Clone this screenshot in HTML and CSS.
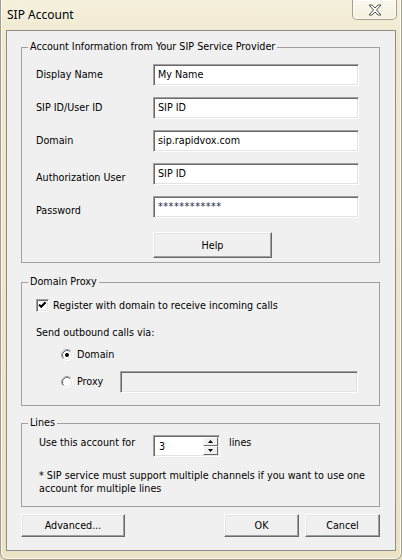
FILE: index.html
```html
<!DOCTYPE html>
<html>
<head>
<meta charset="utf-8">
<link rel="stylesheet" href="styles.css">
</head>
<body>
<div class="window">
  <div class="titlebar">
    <span class="title">SIP Account</span>
    <div class="close">
      <svg width="14" height="12" viewBox="-1 -1 14 12"><path d="M0 0H3L6 3L9 0H12L7.5 5L12 10H9L6 7L3 10H0L4.5 5Z" fill="#fff" stroke="#4f4f4f" stroke-width="1" stroke-linejoin="round"/></svg>
    </div>
  </div>
  <div class="client">
    <fieldset class="group g1">
      <legend>Account Information from Your SIP Service Provider</legend>
      <div class="form">
        <span class="lbl">Display Name</span><div class="field">My Name</div>
        <span class="lbl">SIP ID/User ID</span><div class="field">SIP ID</div>
        <span class="lbl">Domain</span><div class="field">sip.rapidvox.com</div>
        <span class="lbl low">Authorization User</span><div class="field">SIP ID</div>
        <span class="lbl low">Password</span><div class="field pw">************</div>
        <span></span><div class="btn help">Help</div>
      </div>
    </fieldset>

    <fieldset class="group g2">
      <legend>Domain Proxy</legend>
      <div class="proxy">
        <div class="check-row">
          <span class="cb"><svg width="11" height="11" viewBox="0 0 11 11"><path d="M2 4.6L4.2 6.8L8.6 2.3" fill="none" stroke="#000" stroke-width="2"/></svg></span>
          <span>Register with domain to receive incoming calls</span>
        </div>
        <div class="send">Send outbound calls via:</div>
        <div class="radios">
          <div class="radio-row">
            <span class="radio-item">
              <svg width="12" height="12" viewBox="0 0 12 12"><circle cx="6" cy="6" r="5.5" fill="#fff"/><path d="M2.11 9.89A5.5 5.5 0 0 1 9.89 2.11" fill="none" stroke="#a0a0a0"/><path d="M2.11 9.89A5.5 5.5 0 0 0 9.89 2.11" fill="none" stroke="#fff"/><path d="M2.82 9.18A4.5 4.5 0 0 1 9.18 2.82" fill="none" stroke="#696969"/><path d="M2.82 9.18A4.5 4.5 0 0 0 9.18 2.82" fill="none" stroke="#e3e3e3"/><circle cx="6" cy="6" r="2" fill="#000"/></svg>
              <span>Domain</span>
            </span>
          </div>
          <div class="proxy-row">
            <span class="radio-item wide">
              <svg width="12" height="12" viewBox="0 0 12 12"><circle cx="6" cy="6" r="5.5" fill="#fff"/><path d="M2.11 9.89A5.5 5.5 0 0 1 9.89 2.11" fill="none" stroke="#a0a0a0"/><path d="M2.11 9.89A5.5 5.5 0 0 0 9.89 2.11" fill="none" stroke="#fff"/><path d="M2.82 9.18A4.5 4.5 0 0 1 9.18 2.82" fill="none" stroke="#696969"/><path d="M2.82 9.18A4.5 4.5 0 0 0 9.18 2.82" fill="none" stroke="#e3e3e3"/></svg>
              <span>Proxy</span>
            </span>
            <div class="field disabled"></div>
          </div>
        </div>
      </div>
    </fieldset>

    <fieldset class="group g3">
      <legend>Lines</legend>
      <div class="lines">
        <div class="lines-row">
          <span class="use">Use this account for</span>
          <div class="spin">
            <span class="spin-val">3</span>
            <span class="spin-btns">
              <span class="sbtn"><svg width="5" height="3" viewBox="0 0 5 3"><path d="M2.5 0L5 3H0Z" fill="#000"/></svg></span>
              <span class="sbtn"><svg width="5" height="3" viewBox="0 0 5 3"><path d="M0 0H5L2.5 3Z" fill="#000"/></svg></span>
            </span>
          </div>
          <span class="unit">lines</span>
        </div>
        <p class="note">* SIP service must support multiple channels if you want to use one<br>account for multiple lines</p>
      </div>
    </fieldset>

    <div class="actions">
      <div class="btn adv">Advanced...</div>
      <div class="spacer"></div>
      <div class="btn ok">OK</div>
      <div class="btn cancel">Cancel</div>
    </div>
  </div>
</div>
</body>
</html>
```

FILE: styles.css
```css
* { box-sizing: border-box; }

body {
  margin: 0;
  width: 402px;
  height: 560px;
  overflow: hidden;
  background: #e9e1c3;
  font-family: "DejaVu Sans Condensed", "Liberation Sans", sans-serif;
  font-size: 10.7px;
  color: #000;
}

.window {
  height: 560px;
  display: flex;
  flex-direction: column;
  background: linear-gradient(180deg, #f5f0dc 0, #f0e9cf 40px, #ebe3c5 100%);
  border: 1px solid #a29d86;
  border-top: none;
  border-radius: 0 0 7px 7px;
  box-shadow: inset 1px 0 rgba(255,255,255,.75), inset -1px 0 rgba(255,255,255,.75), inset 0 -1px rgba(255,255,255,.75);
}

.titlebar {
  height: 30px;
  flex: none;
  display: flex;
  align-items: flex-start;
}

.title {
  font-family: "Noto Sans", "Open Sans", sans-serif;
  font-size: 12px;
  line-height: 16px;
  margin: 7px 0 0 6px;
  text-shadow: 0 0 6px rgba(255,255,255,.9);
}

.close {
  margin-left: auto;
  margin-right: 4px;
  width: 45px;
  height: 20px;
  border: 1px solid rgba(90, 88, 72, .55);
  border-top: none;
  border-radius: 0 0 5px 5px;
  background: linear-gradient(180deg, rgba(255,255,255,.55), rgba(255,255,255,.2));
  box-shadow: inset 0 0 0 1px rgba(255,255,255,.6);
  display: flex;
  align-items: center;
  justify-content: center;
}

.client {
  flex: 1;
  margin: 0 5px 8px;
  border: 1px solid #8c8c8c;
  background: #f0f0f0;
  padding: 9px 15px 0 14px;
  display: flex;
  flex-direction: column;
}

.group {
  margin: 0;
  padding: 0;
  min-width: 0;
  border: 1px solid #a0a0a0;
}

.group legend {
  margin-left: 6px;
  padding: 0 2px;
  line-height: 14px;
}

.g2 { margin-top: 12px; }
.g3 { margin-top: 10px; }

.form {
  display: grid;
  grid-template-columns: 117px 206px;
  grid-template-rows: repeat(5, 22px) auto;
  row-gap: 11px;
  align-items: center;
  padding: 10px 0 4px 14px;
}

.lbl { line-height: 14px; }
.lbl.low { padding-top: 8px; }

.field {
  height: 22px;
  border: 1px solid;
  border-color: #a0a0a0 #fff #fff #a0a0a0;
  box-shadow: inset 1px 1px #696969, inset -1px -1px #e3e3e3;
  background: #fff;
  padding: 0 4px;
  line-height: 20px;
  white-space: nowrap;
}

.field.pw { letter-spacing: 0.5px; color: #1a2a4a; }

.field.disabled {
  background: #f0f0f0;
  flex: 1;
}

.btn {
  height: 23px;
  border: 1px solid;
  border-color: #fff #696969 #696969 #fff;
  box-shadow: inset -1px -1px #a0a0a0, inset 1px 1px #e3e3e3;
  background: #f0f0f0;
  display: flex;
  align-items: center;
  justify-content: center;
}

.help {
  width: 119px;
  height: 26px;
  margin-top: 3px;
}

.proxy {
  padding: 10px 21px 12px 14px;
  display: flex;
  flex-direction: column;
}

.check-row {
  display: flex;
  align-items: center;
  gap: 4px;
  height: 13px;
  line-height: 13px;
}

.cb {
  width: 13px;
  height: 13px;
  flex: none;
  border: 1px solid;
  border-color: #a0a0a0 #fff #fff #a0a0a0;
  box-shadow: inset 1px 1px #696969, inset -1px -1px #e3e3e3;
  background: #fff;
  display: block;
}

.cb svg { display: block; }

.send {
  margin-top: 14px;
  line-height: 14px;
}

.radios {
  margin-left: 25px;
  margin-top: 8px;
}

.radio-row {
  display: flex;
  align-items: center;
  height: 14px;
}

.radio-item {
  display: flex;
  align-items: center;
  gap: 4px;
  line-height: 14px;
}

.radio-item svg { flex: none; display: block; }

.radio-item.wide { width: 59px; flex: none; }

.proxy-row {
  margin-top: 9px;
  height: 22px;
  display: flex;
  align-items: center;
}

.lines {
  padding: 5px 0 11px 17px;
}

.lines-row {
  display: flex;
  align-items: flex-start;
}

.use {
  width: 114px;
  flex: none;
  padding-top: 1px;
  line-height: 14px;
}

.unit {
  margin-left: 9px;
  padding-top: 1px;
  line-height: 14px;
}

.spin {
  width: 67px;
  height: 22px;
  flex: none;
  border: 1px solid;
  border-color: #a0a0a0 #fff #fff #a0a0a0;
  box-shadow: inset 1px 1px #696969, inset -1px -1px #e3e3e3;
  background: #fff;
  display: flex;
  padding: 1px;
}

.spin-val {
  flex: 1;
  padding-left: 4px;
  line-height: 20px;
}

.spin-btns {
  width: 15px;
  display: flex;
  flex-direction: column;
}

.sbtn {
  height: 9px;
  border: 1px solid;
  border-color: #fff #696969 #696969 #fff;
  background: #f0f0f0;
  display: flex;
  align-items: center;
  justify-content: center;
}

.sbtn svg { display: block; }

.note {
  margin: 12px 0 0;
  line-height: 13px;
}

.actions {
  margin-top: 7px;
  display: flex;
  gap: 6px;
}

.spacer { flex: 1; }

.adv { width: 104px; }
.ok, .cancel { width: 75px; }
```
